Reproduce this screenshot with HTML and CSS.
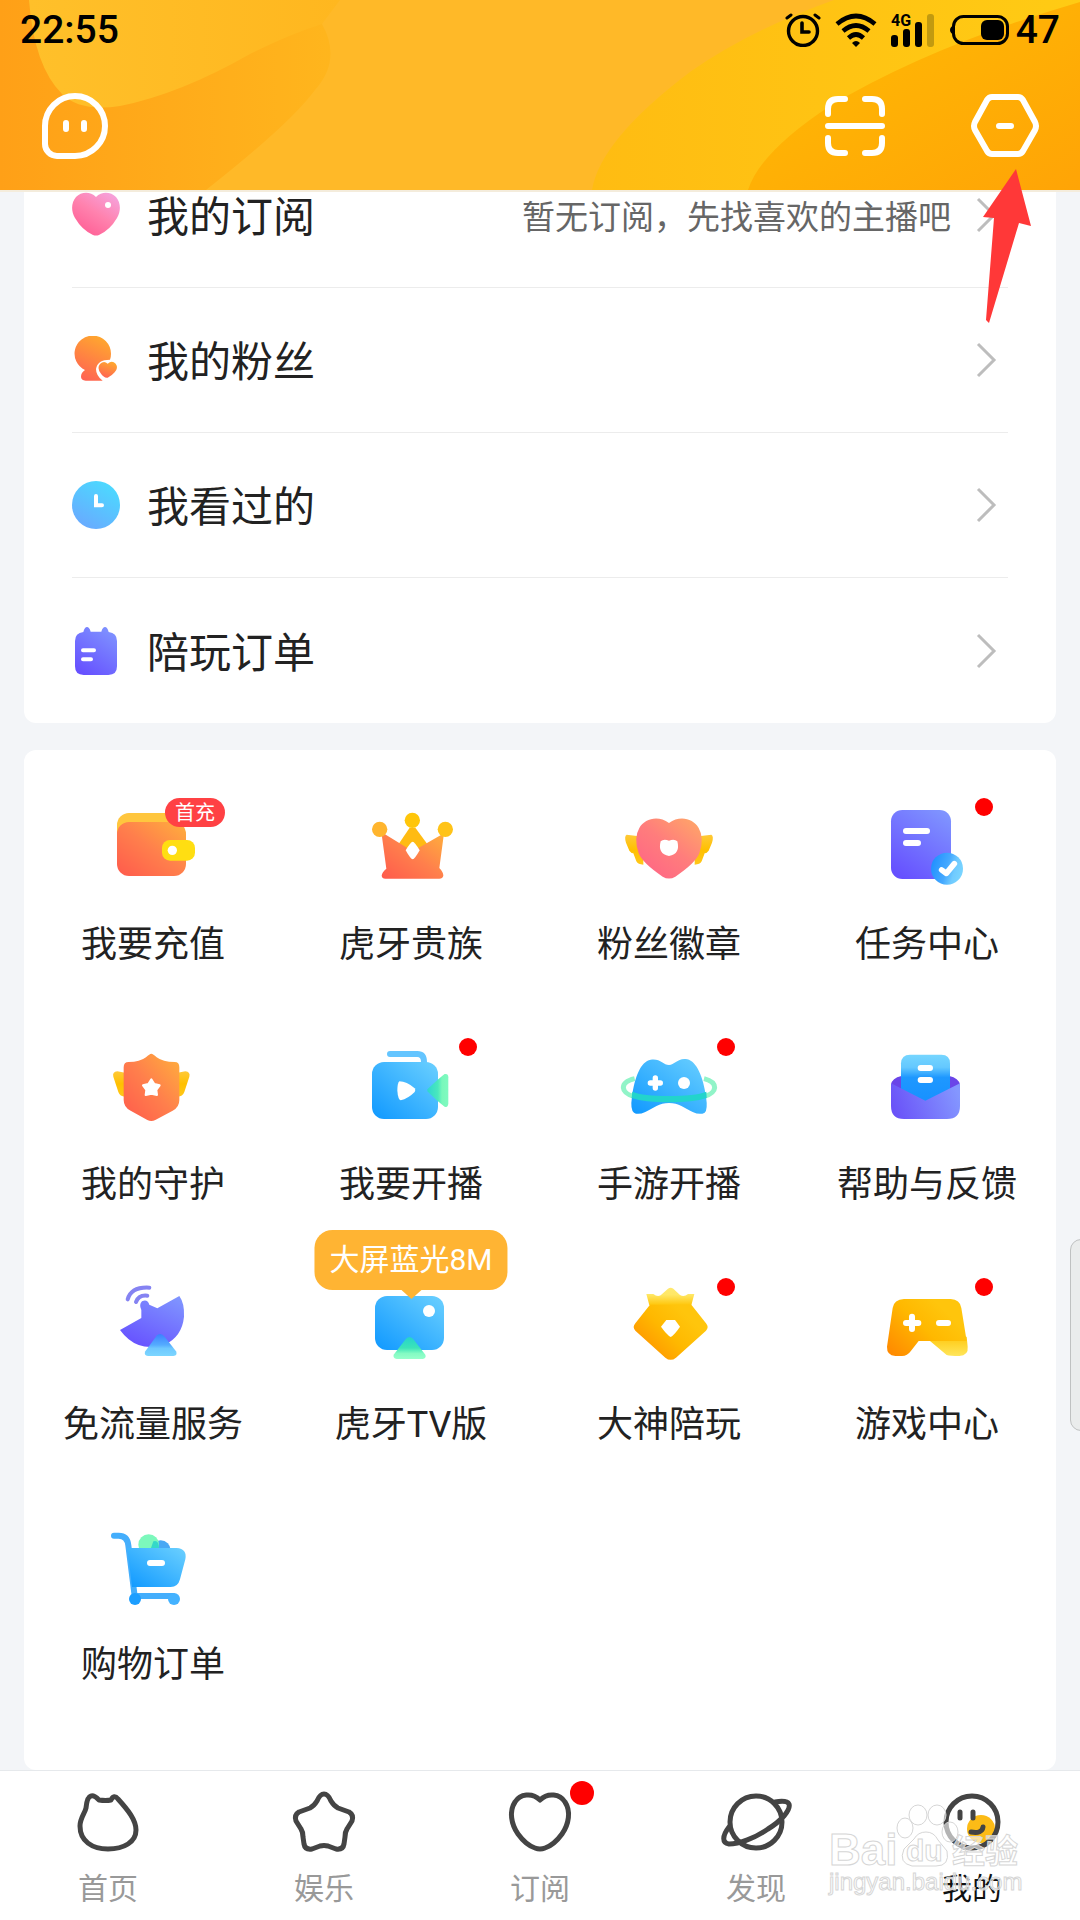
FILE: index.html
```html
<!DOCTYPE html>
<html lang="zh-CN">
<head>
<meta charset="utf-8">
<meta name="viewport" content="width=device-width, initial-scale=1">
<title>我的</title>
<link rel="stylesheet" href="styles.css">
</head>
<body>
<svg class="defs" aria-hidden="true">
  <defs>
    <linearGradient id="pink" x1="0.2" y1="1" x2="0.9" y2="0"><stop offset="0" stop-color="#ff5c93"/><stop offset="0.5" stop-color="#ff82ae"/><stop offset="1" stop-color="#f5a5e0"/></linearGradient>
    <linearGradient id="orange" x1="0" y1="1" x2="1" y2="0"><stop offset="0" stop-color="#ff5a4c"/><stop offset="0.5" stop-color="#ff7f4c"/><stop offset="1" stop-color="#ffb03c"/></linearGradient>
    <linearGradient id="fan" x1="0.3" y1="1" x2="0.7" y2="0"><stop offset="0" stop-color="#ff6353"/><stop offset="1" stop-color="#ffa82e"/></linearGradient>
    <linearGradient id="coral" x1="0.1" y1="0.9" x2="0.9" y2="0"><stop offset="0" stop-color="#ff6685"/><stop offset="0.5" stop-color="#ff7d7c"/><stop offset="1" stop-color="#ffa568"/></linearGradient>
    <linearGradient id="sky" x1="0.2" y1="1" x2="0.8" y2="0"><stop offset="0" stop-color="#6aa8ff"/><stop offset="1" stop-color="#4adcff"/></linearGradient>
    <linearGradient id="blue" x1="0" y1="1" x2="1" y2="0"><stop offset="0" stop-color="#0f98ff"/><stop offset="1" stop-color="#6bd0ff"/></linearGradient>
    <linearGradient id="violet" x1="0.2" y1="1" x2="0.8" y2="0"><stop offset="0" stop-color="#6650ff"/><stop offset="1" stop-color="#7f93ff"/></linearGradient>
    <linearGradient id="violetWide" x1="0" y1="0.6" x2="1" y2="0.4"><stop offset="0" stop-color="#6a52f8"/><stop offset="1" stop-color="#8497ff"/></linearGradient>
    <linearGradient id="gold" x1="0" y1="0.9" x2="0.8" y2="0.3"><stop offset="0" stop-color="#ff8a00"/><stop offset="0.6" stop-color="#ffb800"/><stop offset="1" stop-color="#ffc50c"/></linearGradient>
    <linearGradient id="goldTop" x1="0" y1="0" x2="0" y2="1"><stop offset="0" stop-color="#ffe970"/><stop offset="0.4" stop-color="#ffe765"/><stop offset="1" stop-color="#ffc508"/></linearGradient>
    <linearGradient id="goldFoot" x1="0" y1="0" x2="0" y2="1"><stop offset="0" stop-color="#ffc810"/><stop offset="1" stop-color="#ffe65c"/></linearGradient>
    <linearGradient id="wing" x1="0" y1="0" x2="0" y2="1"><stop offset="0" stop-color="#ffc938"/><stop offset="0.5" stop-color="#ffc000"/><stop offset="1" stop-color="#ffc71a"/></linearGradient>
    <linearGradient id="cyanFoot" x1="0" y1="0" x2="0" y2="1"><stop offset="0" stop-color="#3c80ff"/><stop offset="0.5" stop-color="#55acff"/><stop offset="0.65" stop-color="#6ec8ff"/><stop offset="1" stop-color="#7cd6ff"/></linearGradient>
    <linearGradient id="mintFoot" x1="0" y1="0" x2="0" y2="1"><stop offset="0" stop-color="#25d3cb"/><stop offset="0.5" stop-color="#3ce4b8"/><stop offset="0.75" stop-color="#84fbc3"/><stop offset="1" stop-color="#98ffcc"/></linearGradient>
    <linearGradient id="mintSide" x1="0" y1="0" x2="1" y2="0"><stop offset="0" stop-color="#2fd6d0"/><stop offset="0.5" stop-color="#4ae8bd"/><stop offset="0.7" stop-color="#79f8bb"/><stop offset="1" stop-color="#80fac0"/></linearGradient>
    <linearGradient id="letter" x1="0" y1="0" x2="0" y2="1"><stop offset="0" stop-color="#76d6ff"/><stop offset="0.25" stop-color="#64c8ff"/><stop offset="0.45" stop-color="#1e98ff"/><stop offset="1" stop-color="#1690ff"/></linearGradient>
    <linearGradient id="tick" x1="0" y1="0.3" x2="1" y2="0.6"><stop offset="0" stop-color="#1f8fff"/><stop offset="0.5" stop-color="#45a9ff"/><stop offset="0.75" stop-color="#70cbff"/><stop offset="1" stop-color="#7ad5ff"/></linearGradient>
  </defs>
</svg>

<header class="top">
  <svg class="top-art" viewBox="0 0 1080 190" preserveAspectRatio="none" aria-hidden="true">
    <defs>
      <linearGradient id="h1"><stop offset="0" stop-color="#ffa017"/><stop offset="1" stop-color="#ffb61d"/></linearGradient>
      <linearGradient id="h2"><stop offset="0" stop-color="#ffc02a"/><stop offset="1" stop-color="#ffb71f"/></linearGradient>
      <linearGradient id="h3"><stop offset="0" stop-color="#ffbc12"/><stop offset="1" stop-color="#ffcb14"/></linearGradient>
      <linearGradient id="h4" x1="0" y1="0" x2="1" y2="1"><stop offset="0" stop-color="#ffbc04"/><stop offset="1" stop-color="#ffa406"/></linearGradient>
    </defs>
    <rect width="1080" height="190" fill="#ffb928"/>
    <path d="M0 0H340Q318 8 322 24Q342 60 315 90Q290 124 206 190H0Z" fill="url(#h1)"/>
    <path d="M29 0Q34 66 62 94Q80 112 120 106Q180 94 250 54Q290 34 322 24L340 0Z" fill="url(#h2)"/>
    <path d="M592 190Q600 140 690 72Q750 30 834 0H1080V190Z" fill="url(#h3)"/>
    <path d="M748 190Q760 152 830 106Q930 46 1080 2V190Z" fill="url(#h4)"/>
  </svg>
  <div class="status">
    <span class="clock">22:55</span>
    <div class="indicators">
      <svg width="36" height="34" viewBox="0 0 36 34" fill="none" stroke="#000" stroke-width="3" stroke-linecap="round"><circle cx="18" cy="18" r="14.5" stroke-width="3.4"/><path d="M17 10v9h7" stroke-width="3.6"/><path d="M2 5L6 2M34 5L30 2"/></svg>
      <svg width="42" height="34" viewBox="0 0 42 34" fill="none" stroke="#000" stroke-width="4.6"><path d="M2 11Q21-5 40 11M8 18Q21 7 34 18M13.500 25Q21 18 28.500 25"/><path d="M21 34l-4-4q4-4 8 0z" fill="#000" stroke="none"/></svg>
      <svg class="signal" width="44" height="34" viewBox="0 0 44 34"><text class="net" x="0" y="13">4G</text><g><rect y="22" width="7" height="12" rx="3"/><rect x="12" y="16" width="7" height="18" rx="3"/><rect x="24" y="9" width="7" height="25" rx="3"/><rect x="36" y="1" width="7" height="33" rx="3" fill="#c29a10"/></g></svg>
      <svg width="60" height="34" viewBox="0 0 60 34"><rect x="4.500" y="3.500" width="54" height="27" rx="10" fill="none" stroke="#000" stroke-width="3"/><path d="M5 12q-4 2-4 5t4 5z"/><rect x="32" y="7" width="23" height="20" rx="6"/></svg>
      <span class="level">47</span>
    </div>
  </div>
  <div class="actions">
    <button type="button" class="icon-btn" aria-label="消息"><svg viewBox="0 0 72 72" fill="none" stroke="#fff" stroke-width="6" stroke-linecap="round"><path d="M6 37A30 30 0 1 1 36 67H18A12 12 0 0 1 6 55ZM27 34v6M45 34v6"/></svg></button>
    <div class="actions-end">
      <button type="button" class="icon-btn" aria-label="扫一扫"><svg viewBox="0 0 72 72" fill="none" stroke="#fff" stroke-width="6" stroke-linecap="round"><path d="M9 25V20Q9 10 19 10H26M46 10H53Q63 10 63 20V25M9 49V54Q9 64 19 64H26M46 64H53Q63 64 63 54V49M9 37H63"/></svg></button>
      <button type="button" class="icon-btn" aria-label="设置"><svg viewBox="0 0 72 72" fill="none" stroke="#fff" stroke-width="6" stroke-linecap="round"><path d="M23 8H49Q52 8 54 11L66 33Q68 37 66 41L54 62Q52 65 49 65H23Q20 65 18 62L6 41Q4 37 6 33L18 11Q20 8 23 8ZM30 37H42"/></svg></button>
    </div>
  </div>
</header>

<main class="content">
  <section class="card list">
    <a class="row" href="#sub">
      <svg class="row-icon" viewBox="0 0 48 48"><path d="M24 6C30 0 39 1 44 6C49 12 49 20 45 27Q38 39 27 44Q24 45 21 44Q10 39 3 27C-1 20-1 12 4 6C9 1 18 0 24 6Z" fill="url(#pink)"/><circle cx="36" cy="14" r="3" fill="#fff"/></svg>
      <span class="row-title">我的订阅</span><span class="row-note">暂无订阅，先找喜欢的主播吧</span>
      <svg class="chevron" viewBox="0 0 22 36"><path d="M3 2L19 18L3 34"/></svg>
    </a>
    <a class="row" href="#fans">
      <svg class="row-icon" viewBox="96 109 144 144"><path d="M159 108a54 54 0 0 1 54 54q0 10-3 18-38 0-42 28 0 20 20 35h-51q-14-2-14-12 0-12 12-20a54 54 0 0 1 24-103Z" fill="url(#fan)"/><path d="M203 192Q216 181 227 192Q236 204 224 218Q216 228 203 234Q192 236 182 221Q170 204 180 193Q192 182 203 192Z" fill="url(#fan)"/></svg>
      <span class="row-title">我的粉丝</span>
      <svg class="chevron" viewBox="0 0 22 36"><path d="M3 2L19 18L3 34"/></svg>
    </a>
    <a class="row" href="#history">
      <svg class="row-icon" viewBox="96 545 144 144"><circle cx="168" cy="617" r="72" fill="url(#sky)"/><path d="M168 590V618H186" fill="none" stroke="#fff" stroke-width="12" stroke-linecap="round"/></svg>
      <span class="row-title">我看过的</span>
      <svg class="chevron" viewBox="0 0 22 36"><path d="M3 2L19 18L3 34"/></svg>
    </a>
    <a class="row" href="#orders">
      <svg class="row-icon" viewBox="96 980 144 144"><path d="M130 995Q134 980 141 980T152 994H184Q188 980 195 980T206 995Q231 998 231 1022V1098Q231 1124 205 1124H131Q105 1124 105 1098V1022Q105 998 130 995Z" fill="url(#violet)"/><path d="M129 1050h33M129 1077h24" stroke="#fff" stroke-width="12" stroke-linecap="round"/></svg>
      <span class="row-title">陪玩订单</span>
      <svg class="chevron" viewBox="0 0 22 36"><path d="M3 2L19 18L3 34"/></svg>
    </a>
  </section>

  <section class="card grid">
    <a class="tile" href="#pay">
      <span class="tile-art"><svg viewBox="99 48 360 288"><rect x="171" y="99" width="190" height="120" rx="36" fill="#ffc63e"/><rect x="171" y="126" width="207" height="162" rx="36" fill="url(#orange)"/><rect x="306" y="180" width="99" height="62" rx="24" fill="#ffde12"/><circle cx="337" cy="211" r="14" fill="#fff"/></svg><span class="badge">首充</span></span>
      <span class="tile-name">我要充值</span>
    </a>
    <a class="tile" href="#noble">
      <span class="tile-art"><svg viewBox="873 48 360 288"><path d="M1014 195L1049 143H1066L1104 195L1058 240Z" fill="#ffbb12"/><circle cx="1057" cy="121" r="23" fill="#ffc60a"/><path d="M964 156L1058 214 1152 160 1138 264Q1150 276 1150 287 1148 296 1138 296H976Q966 296 965 287 966 276 979 266Z" fill="url(#orange)"/><circle cx="959" cy="148" r="23" fill="#ffb52e"/><circle cx="1156" cy="148" r="23" fill="#ffc318"/><path d="M1058 185Q1064 185 1079 211 1064 238 1058 238T1037 211Q1052 185 1058 185Z" fill="#fff"/></svg></span>
      <span class="tile-name">虎牙贵族</span>
    </a>
    <a class="tile" href="#medal">
      <span class="tile-art"><svg viewBox="87 48 360 288"><path d="M190 170L140 164Q132 168 138 188L148 212Q154 220 160 220L169 244Q174 254 190 254ZM344 170L394 164Q402 168 396 188L386 212Q380 220 374 220L365 244Q360 254 344 254Z" fill="url(#wing)"/><path d="M267 129C300 105 340 116 356 144Q374 174 358 220Q346 250 286 290Q267 301 248 290Q188 250 176 220Q160 174 178 144C194 116 234 105 267 129Z" fill="url(#coral)"/><path d="M267 182Q283 175 292 184Q302 222 267 228Q232 222 242 184Q251 175 267 182Z" fill="#fff"/></svg></span>
      <span class="tile-name">粉丝徽章</span>
    </a>
    <a class="tile" href="#tasks">
      <span class="tile-art"><svg viewBox="861 48 360 288"><rect x="933" y="90" width="180" height="207" rx="34" fill="url(#violet)"/><path d="M978 153h63M978 189h36" stroke="#fff" stroke-width="18" stroke-linecap="round"/><circle cx="1101" cy="266" r="48" fill="url(#tick)"/><path d="M1085 270L1099 280L1123 251" fill="none" stroke="#fff" stroke-width="17" stroke-linecap="round" stroke-linejoin="round"/></svg><span class="dot"></span></span>
      <span class="tile-name">任务中心</span>
    </a>
    <a class="tile" href="#guard">
      <span class="tile-art"><svg viewBox="99 48 360 288"><path d="M195 158L172 154Q156 156 160 170L175 216Q180 230 195 230ZM353 158L376 154Q392 156 388 170L373 216Q368 230 353 230Z" fill="url(#wing)"/><path d="M274 101Q279 101 290 112Q308 126 344 126Q358 126 358 142V240Q358 262 338 272L286 300Q274 306 262 300L212 272Q191 262 191 240V142Q191 126 206 126Q240 126 258 112Q269 101 274 101Z" fill="url(#orange)"/><path d="M274 178L283 192 299 196 289 210 291 225 274 221 257 225 259 210 249 196 265 192Z" fill="#fff" stroke="#fff" stroke-width="6" stroke-linejoin="round"/></svg></span>
      <span class="tile-name">我的守护</span>
    </a>
    <a class="tile" href="#live">
      <span class="tile-art"><svg viewBox="873 48 360 288"><path d="M990 102H1072Q1092 102 1092 126V140" fill="none" stroke="#64c5ff" stroke-width="18" stroke-linecap="round"/><rect x="936" y="126" width="198" height="171" rx="36" fill="url(#blue)"/><path d="M1018 184Q1040 184 1064 205Q1068 210 1064 216Q1044 236 1022 241Q1014 238 1012 212Q1012 190 1018 184Z" fill="#fff"/><path d="M1102 208Q1140 172 1154 162Q1165 160 1165 172V250Q1164 264 1154 260Q1134 246 1102 214Z" fill="url(#mintSide)"/></svg><span class="dot"></span></span>
      <span class="tile-name">我要开播</span>
    </a>
    <a class="tile" href="#mobile-live">
      <span class="tile-art"><svg viewBox="87 48 360 288"><path d="M164 176Q130 184 130 203Q132 240 267 240T404 203Q404 184 372 176" fill="none" stroke="#91f4c8" stroke-width="15"/><path d="M267 135C284 135 294 112 322 118C350 124 370 172 378 230Q384 268 374 278Q360 286 338 276C314 264 296 249 267 249S220 264 196 276Q174 286 162 278Q150 268 156 230C164 172 182 124 212 119C240 114 250 135 267 135Z" fill="url(#blue)"/><path d="M157 215Q190 228 267 228T379 215L380 234Q340 247 267 247T155 234Z" fill="#22d4cc"/><path d="M226 174V204M211 189H241" stroke="#fff" stroke-width="16" stroke-linecap="round"/><circle cx="312" cy="189" r="18" fill="#fff"/></svg><span class="dot"></span></span>
      <span class="tile-name">手游开播</span>
    </a>
    <a class="tile" href="#help">
      <span class="tile-art"><svg viewBox="861 48 360 288"><path d="M933 194Q936 174 964 168L1036 142 1108 168Q1136 174 1140 194L1110 216H960Z" fill="#6a45e8"/><path d="M963 130Q964 104 990 104H1084Q1110 104 1110 130V230L1036 256 963 230Z" fill="url(#letter)"/><path d="M933 190L1036 242 1140 190V258Q1140 297 1101 297H972Q933 297 933 258Z" fill="url(#violetWide)"/><path d="M1022 144h28M1022 180h28" stroke="#fff" stroke-width="18" stroke-linecap="round"/></svg></span>
      <span class="tile-name">帮助与反馈</span>
    </a>
    <a class="tile" href="#data">
      <span class="tile-art"><svg viewBox="99 168 360 288"><path d="M203 238Q214 200 268 203M228 246Q236 224 262 227" fill="none" stroke="#8583f2" stroke-width="12" stroke-linecap="round"/><path d="M358 228Q374 250 372 290Q366 350 314 374Q250 394 206 358Q190 344 180 330L244 294V270Q236 254 246 244Q262 236 268 254L292 265Z" fill="url(#violet)"/><path d="M291 346Q303 336 314 350L348 394Q354 406 340 408H264Q250 406 256 394Z" fill="url(#cyanFoot)"/></svg></span>
      <span class="tile-name">免流量服务</span>
    </a>
    <a class="tile" href="#tv">
      <span class="tile-art"><svg viewBox="873 168 360 288"><rect x="945" y="228" width="207" height="162" rx="36" fill="url(#blue)"/><circle cx="1107" cy="273" r="18" fill="#fff"/><path d="M1038 356Q1048 346 1059 356L1096 404Q1100 414 1088 417H1010Q998 414 1001 404Z" fill="url(#mintFoot)"/></svg><span class="bubble">大屏蓝光8M</span></span>
      <span class="tile-name">虎牙TV版</span>
    </a>
    <a class="tile" href="#pro">
      <span class="tile-art"><svg viewBox="87 168 360 288"><path d="M199 222L220 222Q232 232 242 226L264 206Q272 200 280 206L300 225Q312 232 324 222L343 222 334 256H208Z" fill="url(#goldTop)"/><path d="M210 254H334L378 310Q388 322 378 332L288 413Q272 426 256 413L166 332Q156 322 166 310Z" fill="url(#gold)"/><path d="M259 300H285L300 320Q284 344 272 351Q260 344 243 320Z" fill="#fff"/></svg><span class="dot"></span></span>
      <span class="tile-name">大神陪玩</span>
    </a>
    <a class="tile" href="#games">
      <span class="tile-art"><svg viewBox="861 168 360 288"><path d="M1050 363L1100 405Q1110 408 1138 408 1166 406 1163 380L1160 350Z" fill="url(#goldFoot)"/><path d="M972 237H1112Q1140 238 1144 264L1160 363H1016L992 394Q982 408 966 408H946Q920 406 921 380L938 264Q942 238 972 237Z" fill="url(#gold)"/><path d="M996 290V327M978 309H1015M1077 309H1104" stroke="#fff" stroke-width="18" stroke-linecap="round"/></svg><span class="dot"></span></span>
      <span class="tile-name">游戏中心</span>
    </a>
    <a class="tile" href="#shop">
      <span class="tile-art"><svg viewBox="219 48 360 288"><circle cx="422" cy="151" r="30" fill="#48a8f4"/><circle cx="386" cy="134" r="31" fill="#7cf8bc"/><path d="M400 124q16 -6 17 20h-24z" fill="#34d8c8"/><path d="M282 107H296Q322 107 325 136L344 288H458" fill="none" stroke="#44aefc" stroke-width="18" stroke-linecap="round"/><path d="M322 144H470Q502 146 496 178L480 238Q474 261 452 261H336Z" fill="url(#blue)"/><circle cx="345" cy="297" r="18" fill="#1c9eff"/><circle cx="462" cy="297" r="18" fill="#44b2ff"/><path d="M390 189h36" stroke="#fff" stroke-width="18" stroke-linecap="round"/></svg></span>
      <span class="tile-name">购物订单</span>
    </a>
  </section>
</main>

<nav class="tabs">
  <a class="tab" href="#home"><span class="tab-art"><svg viewBox="0 0 64 64"><path d="M15 6Q18 5 23 10Q30 11 35 10Q38 4 42 9C52 20 60 30 60 40C60 52 48 59 32 59S4 51 4 36C4 28 9 23 10 18Q11 7 15 6Z"/></svg></span>首页</a>
  <a class="tab" href="#fun"><span class="tab-art"><svg viewBox="0 0 64 64"><path d="M32 4Q36 4 39 11Q42 16 46 18L57 22Q62 25 60 31L55 39Q53 42 53 47L52 54Q51 60 44 59L36 56Q32 55 28 56L20 59Q13 60 12 54L11 47Q11 42 9 39L4 31Q2 25 7 22L18 18Q22 16 25 11Q28 4 32 4Z"/></svg></span>娱乐</a>
  <a class="tab" href="#follow"><span class="tab-art"><svg viewBox="0 0 64 64"><path d="M32 10C40 2 52 4 57 12C63 21 61 34 54 44Q46 55 37 58Q32 60 27 58Q18 55 10 44C3 34 1 21 7 12C12 4 24 2 32 10Z"/></svg><span class="tab-dot"></span></span>订阅</a>
  <a class="tab" href="#find"><span class="tab-art"><svg viewBox="0 0 64 64"><circle cx="32" cy="32" r="26"/><path d="M5 37C-2 46-2 53 5 54C15 54 31 48 44 39C57 31 67 20 65 14Q63 10 51 12"/></svg></span>发现</a>
  <a class="tab tab-on" href="#me" aria-current="page"><span class="tab-art"><svg viewBox="0 0 64 64"><circle cx="41" cy="39" r="14" fill="#fcbb16" stroke="none"/><circle cx="32" cy="32" r="26"/><path d="M20 22v6M33 22v6M31 42Q42 44 43 37"/></svg></span>我的</a>
</nav>

<span class="edge-handle" aria-hidden="true"></span>
<svg class="pointer" viewBox="980 166 54 160" aria-hidden="true"><path d="M1016 169L1031 226 1019 223 989 323 986 320 994 218 983 217Z" fill="#ff3838"/></svg>
<svg class="mark" viewBox="0 0 200 96" aria-hidden="true">
  <g class="mark-ink">
    <text class="mark-logo" x="1" y="59">Bai</text>
    <ellipse cx="77" cy="22" rx="8" ry="10"/><ellipse cx="90" cy="9" rx="9" ry="10"/><ellipse cx="109" cy="9" rx="9" ry="10"/><ellipse cx="122" cy="26" rx="8" ry="10"/>
    <path d="M98 26Q106 26 110 34L119 45Q122 60 108 60H84Q70 57 76 43L86 33Q90 26 98 26Z"/>
    <text class="mark-du" x="78" y="55">du</text>
    <text class="mark-cn" x="124" y="57">经验</text>
    <text class="mark-url" x="1" y="84">jingyan.baidu.com</text>
  </g>
</svg>
</body>
</html>
```
FILE: styles.css
```css
* {
  box-sizing: border-box;
}

body {
  position: relative;
  display: flex;
  flex-direction: column;
  min-height: 100vh;
  margin: 0;
  overflow-x: hidden;
  background: #f3f5f8;
  color: #222;
  font-family: Roboto, "Noto Sans CJK SC", sans-serif;
}

a {
  color: inherit;
  text-decoration: none;
}

svg {
  display: block;
  flex-shrink: 0;
}

.defs {
  position: absolute;
  width: 0;
  height: 0;
}

/* Header */
.top {
  position: relative;
  z-index: 2;
  border-bottom: 2px solid #f4ecdc;
  background: #ffb928;
}

.top-art {
  position: absolute;
  inset: 0;
  width: 100%;
  height: 100%;
}

.status,
.actions {
  position: relative;
  display: flex;
  align-items: center;
  justify-content: space-between;
}

.status {
  height: 60px;
  padding: 0 20px;
  color: #000;
  font-size: 39px;
  font-weight: 500;
  line-height: 60px;
}

.indicators {
  display: flex;
  align-items: center;
  gap: 14px;
}

.signal {
  overflow: visible;
}

.level {
  margin-left: -7px;
}

.net {
  font-size: 16px;
  font-weight: 700;
}

.actions {
  height: 130px;
  padding: 0 39px;
}

.actions-end {
  display: flex;
  gap: 78px;
}

.icon-btn {
  width: 72px;
  height: 72px;
  padding: 0;
  border: 0;
  background: none;
}

.icon-btn svg {
  width: 72px;
  height: 72px;
}

/* Cards */
.content {
  display: flex;
  flex: 1;
  flex-direction: column;
  gap: 27px;
  margin-top: -49px;
  padding: 0 24px;
}

.card {
  border-radius: 12px;
  background: #fff;
}

.list {
  padding: 0 48px;
}

.row {
  display: flex;
  align-items: center;
  height: 145px;
  border-bottom: 1px solid #ececec;
}

.row:last-child {
  border-bottom: 0;
}

.row-icon {
  width: 48px;
  height: 48px;
}

.row-title {
  margin-left: 27px;
  padding-top: 6px;
  font-size: 42px;
  line-height: 60px;
}

.row-note {
  margin-left: auto;
  padding-top: 6px;
  color: #666;
  font-size: 33px;
  line-height: 48px;
}

.chevron {
  width: 22px;
  height: 36px;
  margin-left: auto;
  margin-right: 11px;
  fill: none;
  stroke: #bdbdbd;
  stroke-width: 3;
}

.row-note + .chevron {
  margin-left: 24px;
}

.grid {
  display: grid;
  flex: 1;
  grid-template-columns: repeat(4, 1fr);
  align-content: start;
  row-gap: 64px;
  padding: 46px 0 78px;
}

.tile {
  display: flex;
  flex-direction: column;
  align-items: center;
  gap: 26px;
}

.tile-art {
  position: relative;
  width: 120px;
  height: 96px;
}

.tile-art svg {
  width: 120px;
  height: 96px;
}

.tile-name {
  font-size: 36px;
  line-height: 54px;
  white-space: nowrap;
}

.badge {
  position: absolute;
  top: 2px;
  left: 72px;
  width: 60px;
  padding-top: 1px;
  border-radius: 15px;
  background: #ff4144;
  color: #fff;
  font-size: 20px;
  line-height: 28px;
  text-align: center;
}

.dot {
  position: absolute;
  top: 2px;
  right: -6px;
  width: 18px;
  height: 18px;
  border-radius: 50%;
  background: #f00;
}

.bubble {
  position: absolute;
  top: -46px;
  left: 50%;
  padding: 0 15px;
  border-radius: 18px;
  background: #ffb433;
  color: #fff;
  font-size: 30px;
  line-height: 60px;
  white-space: nowrap;
  transform: translateX(-50%);
}

.bubble::after {
  position: absolute;
  top: 100%;
  left: 50%;
  border: 10px solid transparent;
  border-top: 9px solid #ffb433;
  border-bottom: 0;
  content: "";
  transform: translateX(-50%);
}

/* Bottom tabs */
.tabs {
  display: grid;
  grid-template-columns: repeat(5, 1fr);
  height: 150px;
  border-top: 1px solid #e6e9ec;
  background: #fff;
}

.tab {
  display: flex;
  flex-direction: column;
  align-items: center;
  gap: 13px;
  padding-top: 19px;
  color: #999;
  font-size: 30px;
  line-height: 44px;
}

.tab-on {
  color: #111;
}

.tab-art {
  position: relative;
  width: 64px;
  height: 64px;
}

.tab-art svg {
  width: 64px;
  height: 64px;
  overflow: visible;
  fill: none;
  stroke: #444;
  stroke-width: 5;
  stroke-linecap: round;
  stroke-linejoin: round;
}

.tab-dot {
  position: absolute;
  top: -9px;
  right: -22px;
  width: 24px;
  height: 24px;
  border-radius: 50%;
  background: #f00;
}

/* Overlays */
.edge-handle {
  position: absolute;
  top: 1239px;
  right: -12px;
  width: 22px;
  height: 192px;
  border: 1px solid #bfc1c1;
  border-radius: 12px;
  background: #eaecec;
}

.pointer {
  position: absolute;
  top: 166px;
  right: 46px;
  z-index: 3;
  width: 54px;
  height: 160px;
}

.mark {
  position: absolute;
  right: 52px;
  bottom: 18px;
  width: 200px;
  height: 96px;
  overflow: visible;
}

.mark-ink {
  fill: rgba(255, 255, 255, 0.6);
  stroke: #d6d6d6;
  stroke-width: 1;
}

.mark-logo {
  font: 700 44px "Liberation Sans", sans-serif;
}

.mark-du {
  font: 700 30px "Liberation Sans", sans-serif;
}

.mark-cn {
  font: 700 33px "Noto Sans CJK SC", sans-serif;
}

.mark-url {
  font: 400 24px "Liberation Sans", sans-serif;
}
```
